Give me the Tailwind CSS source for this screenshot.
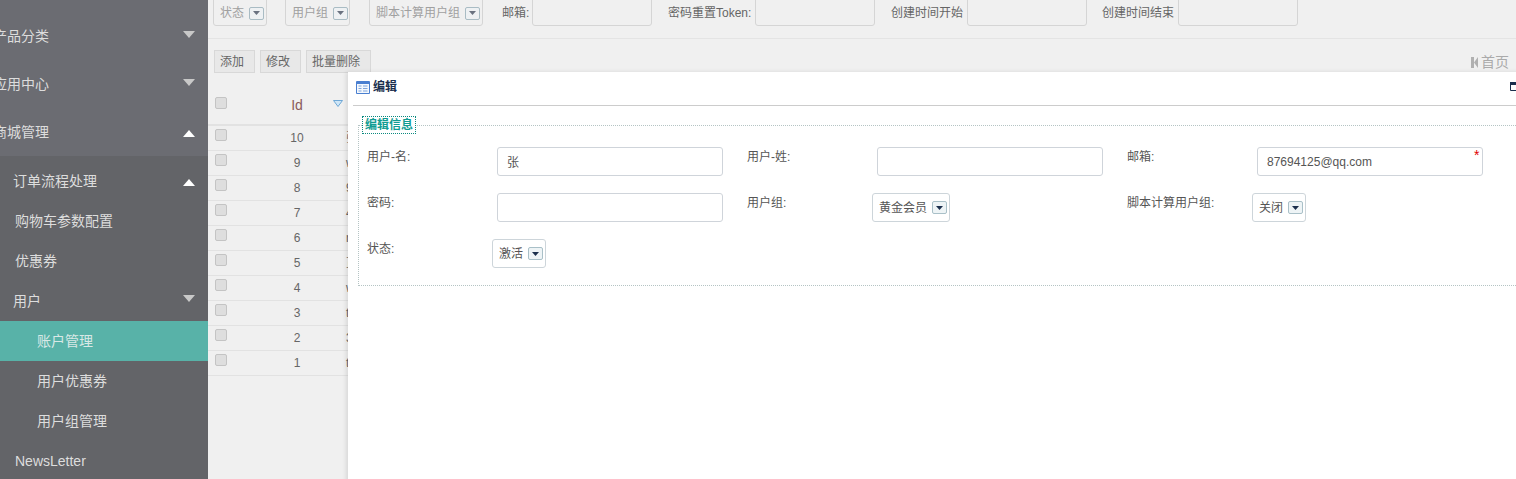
<!DOCTYPE html>
<html lang="en">
<head>
    <meta charset="UTF-8">
    <title>账户管理</title>
    <script src="https://cdn.jsdelivr.net/npm/@tailwindcss/browser@4"></script>
</head>
<body>
<div class="relative flex w-[1516px] h-[479px] overflow-hidden bg-[#f0f0f0] font-['Liberation_Sans','Noto_Sans_CJK_SC',sans-serif] text-xs text-[#666]">

    <!-- Sidebar -->
    <aside class="w-[208px] shrink-0 bg-[#636468] text-sm text-[#dddddd]">
        <div class="bg-[#6b6c72] pt-[12px] h-[156px]">
            <div class="flex items-center justify-between h-[48px] -ml-[7px] pr-[13px]"><span>产品分类</span><svg class="w-3 h-[7px] -mt-[4px]" viewBox="0 0 12 7"><path d="M0 0h12L6 7z" fill="#c8c8c8"/></svg></div>
            <div class="flex items-center justify-between h-[48px] -ml-[7px] pr-[13px]"><span>应用中心</span><svg class="w-3 h-[7px] -mt-[4px]" viewBox="0 0 12 7"><path d="M0 0h12L6 7z" fill="#c8c8c8"/></svg></div>
            <div class="flex items-center justify-between h-[48px] -ml-[7px] pr-[13px]"><span>商城管理</span><svg class="w-3 h-[7px] mt-[2px]" viewBox="0 0 12 7"><path d="M0 7h12L6 0z" fill="#ffffff"/></svg></div>
        </div>
        <div class="pt-[5px]">
            <div class="flex items-center justify-between h-[40px] pl-[13px] pr-[13px]"><span>订单流程处理</span><svg class="w-3 h-[7px] mt-[2px]" viewBox="0 0 12 7"><path d="M0 7h12L6 0z" fill="#ffffff"/></svg></div>
            <div class="flex items-center h-[40px] pl-[15px]">购物车参数配置</div>
            <div class="flex items-center h-[40px] pl-[15px]">优惠券</div>
            <div class="flex items-center justify-between h-[40px] pl-[13px] pr-[13px]"><span class="-mt-[1px]">用户</span><svg class="w-3 h-[7px] -mt-[5px]" viewBox="0 0 12 7"><path d="M0 0h12L6 7z" fill="#c8c8c8"/></svg></div>
            <div class="flex items-center h-[40px] pl-[37px] bg-[#58b2a8] text-[#d8e8e6]">账户管理</div>
            <div class="flex items-center h-[40px] pl-[37px]">用户优惠券</div>
            <div class="flex items-center h-[40px] pl-[37px]">用户组管理</div>
            <div class="flex items-center h-[40px] pl-[15px]">NewsLetter</div>
        </div>
    </aside>

    <!-- Main -->
    <main class="flex-1 min-w-0">
        <!-- Filters -->
        <div class="flex items-start h-[43px] border-b border-[#e4e4e4] -mt-[4px]">
            <div class="flex items-center h-[30px] pt-1 ml-[5px] w-[54px] pl-[6px] border border-[#d5d5d5] rounded-[3px] text-[#a0a0a0]">状态<span class="flex items-center justify-center w-[15px] h-[13px] ml-[5px] border border-[#a9bcc4] rounded-[2px] bg-[#eef1f3]"><svg class="w-[7px] h-1" viewBox="0 0 7 4"><path d="M0 0h7L3.500 4z" fill="#6a7280"/></svg></span></div>
            <div class="flex items-center h-[30px] pt-1 ml-[18px] w-[65px] pl-[6px] border border-[#d5d5d5] rounded-[3px] text-[#a0a0a0]">用户组<span class="flex items-center justify-center w-[15px] h-[13px] ml-[5px] border border-[#a9bcc4] rounded-[2px] bg-[#eef1f3]"><svg class="w-[7px] h-1" viewBox="0 0 7 4"><path d="M0 0h7L3.500 4z" fill="#6a7280"/></svg></span></div>
            <div class="flex items-center h-[30px] pt-1 ml-[19px] w-[114px] pl-[6px] border border-[#d5d5d5] rounded-[3px] text-[#a0a0a0]">脚本计算用户组<span class="flex items-center justify-center w-[15px] h-[13px] ml-[5px] border border-[#a9bcc4] rounded-[2px] bg-[#eef1f3]"><svg class="w-[7px] h-1" viewBox="0 0 7 4"><path d="M0 0h7L3.500 4z" fill="#6a7280"/></svg></span></div>
            <span class="flex items-center h-[34px] ml-[19px] w-[30px]">邮箱:</span>
            <div class="h-[30px] w-[120px] border border-[#d5d5d5] rounded-[3px]"></div>
            <span class="flex items-center h-[34px] ml-[16px] w-[87px]">密码重置Token:</span>
            <div class="h-[30px] w-[120px] border border-[#d5d5d5] rounded-[3px]"></div>
            <span class="flex items-center h-[34px] ml-[16px] w-[76px]">创建时间开始</span>
            <div class="h-[30px] w-[120px] border border-[#d5d5d5] rounded-[3px]"></div>
            <span class="flex items-center h-[34px] ml-[15px] w-[76px]">创建时间结束</span>
            <div class="h-[30px] w-[120px] border border-[#d5d5d5] rounded-[3px]"></div>
        </div>

        <!-- Toolbar -->
        <div class="flex items-start justify-between h-[46px] pt-[11px] pl-[6px] pr-[7px]">
            <div class="flex gap-[5px]">
                <button class="w-[41px] h-[23px] pl-[5px] text-left bg-[#e8e8e8] border border-[#d8d8d8] text-[#666]">添加</button>
                <button class="w-[41px] h-[23px] pl-[5px] text-left bg-[#e8e8e8] border border-[#d8d8d8] text-[#666]">修改</button>
                <button class="w-[65px] h-[23px] pl-[5px] text-left bg-[#e8e8e8] border border-[#d8d8d8] text-[#666]">批量删除</button>
            </div>
            <div class="flex items-center gap-[3px] mt-[2px] text-sm text-[#aaaaaa]">
                <svg class="w-[7px] h-[11px]" viewBox="0 0 7 11"><path d="M0 0h3v11H0zM7 0v11L3 5.500z" fill="#b0b0b0"/></svg>
                <span>首页</span>
            </div>
        </div>

        <!-- Table -->
        <div class="w-[320px]">
            <div class="flex items-center h-[41px] border-b-2 border-[#e2e2e2]">
                <input type="checkbox" class="w-3 h-3 ml-[7px] -mt-[4px] appearance-none bg-[#dedede] border border-[#c4c4c4] rounded-[2px]">
                <span class="w-[106px] pl-[34px] text-center text-sm text-[#8a5a5a]">Id</span>
                <svg class="w-[10px] h-[7px] -mt-[2px]" viewBox="0 0 10 7"><path d="M.5.500h9L5 6.500z" fill="#cfe6f7" stroke="#6fa8d6"/></svg>
            </div>
            <div class="flex items-center h-[25px] border-b border-[#e2e2e2]"><input type="checkbox" class="w-3 h-3 ml-[7px] -mt-[6px] appearance-none bg-[#dedede] border border-[#c4c4c4] rounded-[2px]"><span class="w-[119px] pl-[21px] text-center">10</span><span>张</span></div>
            <div class="flex items-center h-[25px] border-b border-[#e2e2e2]"><input type="checkbox" class="w-3 h-3 ml-[7px] -mt-[6px] appearance-none bg-[#dedede] border border-[#c4c4c4] rounded-[2px]"><span class="w-[119px] pl-[21px] text-center">9</span><span>w</span></div>
            <div class="flex items-center h-[25px] border-b border-[#e2e2e2]"><input type="checkbox" class="w-3 h-3 ml-[7px] -mt-[6px] appearance-none bg-[#dedede] border border-[#c4c4c4] rounded-[2px]"><span class="w-[119px] pl-[21px] text-center">8</span><span>9</span></div>
            <div class="flex items-center h-[25px] border-b border-[#e2e2e2]"><input type="checkbox" class="w-3 h-3 ml-[7px] -mt-[6px] appearance-none bg-[#dedede] border border-[#c4c4c4] rounded-[2px]"><span class="w-[119px] pl-[21px] text-center">7</span><span>4</span></div>
            <div class="flex items-center h-[25px] border-b border-[#e2e2e2]"><input type="checkbox" class="w-3 h-3 ml-[7px] -mt-[6px] appearance-none bg-[#dedede] border border-[#c4c4c4] rounded-[2px]"><span class="w-[119px] pl-[21px] text-center">6</span><span>n</span></div>
            <div class="flex items-center h-[25px] border-b border-[#e2e2e2]"><input type="checkbox" class="w-3 h-3 ml-[7px] -mt-[6px] appearance-none bg-[#dedede] border border-[#c4c4c4] rounded-[2px]"><span class="w-[119px] pl-[21px] text-center">5</span><span>芷</span></div>
            <div class="flex items-center h-[25px] border-b border-[#e2e2e2]"><input type="checkbox" class="w-3 h-3 ml-[7px] -mt-[6px] appearance-none bg-[#dedede] border border-[#c4c4c4] rounded-[2px]"><span class="w-[119px] pl-[21px] text-center">4</span><span>w</span></div>
            <div class="flex items-center h-[25px] border-b border-[#e2e2e2]"><input type="checkbox" class="w-3 h-3 ml-[7px] -mt-[6px] appearance-none bg-[#dedede] border border-[#c4c4c4] rounded-[2px]"><span class="w-[119px] pl-[21px] text-center">3</span><span>t</span></div>
            <div class="flex items-center h-[25px] border-b border-[#e2e2e2]"><input type="checkbox" class="w-3 h-3 ml-[7px] -mt-[6px] appearance-none bg-[#dedede] border border-[#c4c4c4] rounded-[2px]"><span class="w-[119px] pl-[21px] text-center">2</span><span>3</span></div>
            <div class="flex items-center h-[25px] border-b border-[#e2e2e2]"><input type="checkbox" class="w-3 h-3 ml-[7px] -mt-[6px] appearance-none bg-[#dedede] border border-[#c4c4c4] rounded-[2px]"><span class="w-[119px] pl-[21px] text-center">1</span><span>t</span></div>
        </div>
    </main>

    <!-- Edit dialog, sits over the table -->
    <section class="absolute left-[348px] top-[72px] w-[1300px] h-[420px] bg-white shadow-[-2px_0_4px_rgba(0,0,0,0.10)] text-[#555]">
        <div class="flex items-center h-[33px] ml-[5px] border-b border-[#cccccc] box-content">
            <svg class="w-[14px] h-[13px] ml-[3px] -mt-[2px]" viewBox="0 0 14 13"><path d="M.5.500h13v12H.5z" fill="#f4f8fd" stroke="#4a7fd0"/><path d="M1 1h12v2H1z" fill="#4a7fd0"/><path d="M2.500 5h3M7 5h4.500M2.500 7.500h3M7 7.500h4.500M2.500 10h3M7 10h4.500" stroke="#7fa5dc"/></svg>
            <span class="ml-[3px] text-[#1b2f4d] font-bold -mt-[3px]">编辑</span>
            <svg class="absolute left-[1162px] top-[10px] w-[7px] h-[9px]" viewBox="0 0 7 9"><path d="M.5 1.500h6v7h-6z" fill="none" stroke="#1b2f4d"/><path d="M0 0h7v3H0z" fill="#1b2f4d"/></svg>
        </div>

        <div class="mt-[19px] ml-[10px] h-[161px] border border-dotted border-[#b5c4c4]">
            <div class="w-fit ml-[3px] -mt-[10px] h-[18px] px-[2px] flex items-center bg-white border border-dotted border-[#0c8a80] text-[#119c92] font-bold">编辑信息</div>
            <div class="grid grid-cols-[380px_380px_380px] gap-y-[17px] mt-[13px] ml-[8px]">
                <div class="flex items-start">
                    <label class="w-[130px] mt-[2px]">用户-名:</label>
                    <input value="张" class="w-[226px] h-[29px] px-[9px] border border-[#cfd4da] rounded-[3px]">
                </div>
                <div class="flex items-start">
                    <label class="w-[130px] mt-[2px]">用户-姓:</label>
                    <input class="w-[226px] h-[29px] px-[9px] border border-[#cfd4da] rounded-[3px]">
                </div>
                <div class="relative flex items-start">
                    <label class="w-[130px] mt-[2px]">邮箱:</label>
                    <input value="87694125@qq.com" class="w-[226px] h-[29px] px-[9px] border border-[#cfd4da] rounded-[3px]">
                    <span class="absolute left-[347px] top-[1px] text-sm text-[#e00000] leading-[14px]">*</span>
                </div>
                <div class="flex items-start">
                    <label class="w-[130px] mt-[2px]">密码:</label>
                    <input class="w-[226px] h-[29px] px-[9px] border border-[#cfd4da] rounded-[3px]">
                </div>
                <div class="flex items-start">
                    <label class="w-[125px] mt-[2px]">用户组:</label>
                    <div class="flex items-center w-[78px] h-[29px] pl-[6px] border border-[#cdd5da] rounded-[3px]">黄金会员<span class="flex items-center justify-center w-[15px] h-[13px] ml-[5px] border border-[#a9c0c8] rounded-[2px] bg-[#eef4f6]"><svg class="w-[7px] h-1" viewBox="0 0 7 4"><path d="M0 0h7L3.500 4z" fill="#1b2f4d"/></svg></span></div>
                </div>
                <div class="flex items-start">
                    <label class="w-[125px] mt-[2px]">脚本计算用户组:</label>
                    <div class="flex items-center w-[54px] h-[29px] pl-[6px] border border-[#cdd5da] rounded-[3px]">关闭<span class="flex items-center justify-center w-[15px] h-[13px] ml-[5px] border border-[#a9c0c8] rounded-[2px] bg-[#eef4f6]"><svg class="w-[7px] h-1" viewBox="0 0 7 4"><path d="M0 0h7L3.500 4z" fill="#1b2f4d"/></svg></span></div>
                </div>
                <div class="flex items-start">
                    <label class="w-[125px] mt-[2px]">状态:</label>
                    <div class="flex items-center w-[54px] h-[29px] pl-[6px] border border-[#cdd5da] rounded-[3px]">激活<span class="flex items-center justify-center w-[15px] h-[13px] ml-[5px] border border-[#a9c0c8] rounded-[2px] bg-[#eef4f6]"><svg class="w-[7px] h-1" viewBox="0 0 7 4"><path d="M0 0h7L3.500 4z" fill="#1b2f4d"/></svg></span></div>
                </div>
            </div>
        </div>
    </section>
</div>
</body>
</html>
